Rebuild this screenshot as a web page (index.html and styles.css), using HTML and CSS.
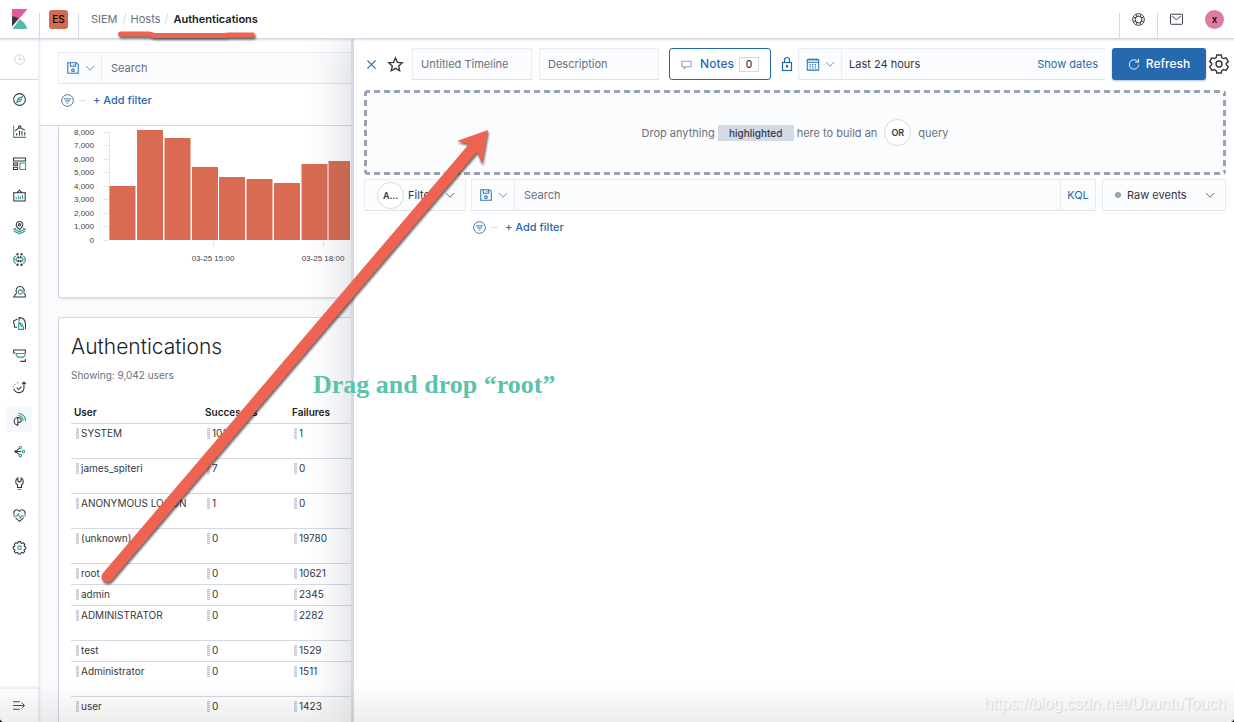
FILE: index.html
```
<!DOCTYPE html>
<html lang="en">
<head>
    <meta charset="UTF-8">
    <meta name="viewport" content="width=device-width, initial-scale=1.0">
    <title>Authentications - Hosts - SIEM</title>
    <link rel="stylesheet" href="styles.css">
</head>
<body>
    <!-- shared icons -->
    <svg class="defs" aria-hidden="true">
        <symbol id="i-save" viewBox="0 0 16 16"><path d="M2 2h10l2 2v10H2zM5 2v4h6V2M9 3.500v1"/><circle cx="8" cy="10.500" r="1.500"/></symbol>
        <symbol id="i-down" viewBox="0 0 16 16"><path d="M1.500 5 8 11.500 14.500 5"/></symbol>
        <symbol id="i-filter" viewBox="0 0 16 16"><circle cx="8" cy="8" r="7.200"/><path d="M3.500 6h9M5 8.500h6M7 11h2"/></symbol>
    </svg>

    <header class="header">
        <a class="logo" href="#" aria-label="Kibana">
            <svg width="16" height="20" viewBox="0 0 16 20">
                <path fill="#e8599b" d="M0 0h15.500L0 18z"/>
                <path fill="#343741" d="M0 7.500c2.500 0 4.800.6 6.500 1.700L0 17z"/>
                <path fill="#54b8b1" d="M7.700 10.200c3.800 2 6.500 5.400 7.500 9.800H.5z"/>
            </svg>
        </a>
        <div class="header-cell"><span class="space">ES</span></div>
        <nav class="breadcrumbs" aria-label="Breadcrumbs">
            <a href="#">SIEM</a>
            <span class="slash"></span>
            <a href="#">Hosts</a>
            <span class="slash"></span>
            <span class="current">Authentications</span>
        </nav>
        <button class="header-cell narrow" aria-label="Help">
            <svg class="icon" width="13" height="13" viewBox="0 0 16 16"><circle cx="8" cy="8" r="7.200"/><circle cx="8" cy="8" r="4.200"/><path d="M2 5.500l3 .6M5.500 2l.6 3M14 5.500l-3 .6M10.500 2l-.6 3M2 10.500l3-.6M5.500 14l.6-3M14 10.500l-3-.6M10.500 14l-.6-3"/></svg>
        </button>
        <button class="header-cell narrow" aria-label="News">
            <svg class="icon" width="13" height="11" viewBox="0 0 16 13"><rect x=".6" y="0" width="14.800" height="12.400" rx="1"/><path d="M2.500 2.200l4.700 4q.8.600 1.600 0l4.700-4"/></svg>
        </button>
        <button class="header-user" aria-label="Account"><span class="avatar">x</span></button>
    </header>

    <div class="layout">
        <nav class="sidenav" aria-label="Applications">
            <button class="recent" aria-label="Recently viewed">
                <svg class="icon" width="11" height="11" viewBox="0 0 16 16"><circle cx="8" cy="8" r="7"/><path d="M8 3.500V8h4"/></svg>
            </button>
            <ul class="apps">
                <li><a href="#" aria-label="Discover"><svg class="icon" viewBox="0 0 16 16"><circle cx="8" cy="8" r="7.200"/><path class="teal" d="M11.500 4.500l-2 5-5 2 2-5zM6.500 6.500l3 3"/></svg></a></li>
                <li><a href="#" aria-label="Visualize"><svg class="icon" viewBox="0 0 16 16"><path class="teal" d="M.8 1v14.200H16"/><path d="M4.500 13v-3M8 13V7.500M11 13V7.500M14.500 13V8.500M2.500 7.500 7 3.500M9.500 3.500l5 3"/><circle cx="8.300" cy="2.500" r="1.400"/></svg></a></li>
                <li><a href="#" aria-label="Dashboard"><svg class="icon" viewBox="0 0 16 16"><path d="M.6 1.200h14.800v3.800H.6zM.6 7.500h5v2.500h-5zM.6 12.500h5v2.800h-5z"/><path class="teal" d="M8.500 7.500h6.900v7.800H8.500z"/></svg></a></li>
                <li><a href="#" aria-label="Canvas"><svg class="icon" viewBox="0 0 16 16"><path d="M1 4.500h14v10.300H1zM5 4.500 8 1.500l3 3M0 4.500h16"/><path class="teal" d="M4 12.500V10M6.500 12.500V8M9 12.500V9M11.800 12.500V7"/></svg></a></li>
                <li><a href="#" aria-label="Maps"><svg class="icon" viewBox="0 0 16 16"><path d="M8 10.500C5 7.800 4 6.300 4 4.500a4 4 0 0 1 8 0C12 6.300 11 7.800 8 10.500z"/><circle cx="8" cy="4.600" r="1.400"/><path class="teal" d="M3.500 9 1 10.200l7 2.800 7-2.800L12.500 9M1 12.700l7 2.800 7-2.800"/></svg></a></li>
                <li><a href="#" aria-label="Machine Learning"><svg class="icon" viewBox="0 0 16 16"><path class="teal" d="M3.500 3.500 1 5.500v5l2.500 2.500M12.500 3.500l2.500 2v5L12.500 13M1 8h2M13 8h2M4 5.500v5M12 5.500v5"/><circle cx="5.500" cy="1.500" r=".8"/><circle cx="10.500" cy="1.500" r=".8"/><circle cx="6.500" cy="5.500" r=".7"/><circle cx="9.500" cy="5.500" r=".7"/><circle cx="6.500" cy="10" r=".7"/><circle cx="9.500" cy="10" r=".7"/><circle cx="5.500" cy="14.500" r=".8"/><circle cx="10.500" cy="14.500" r=".8"/></svg></a></li>
                <li><a href="#" aria-label="Metrics"><svg class="icon" viewBox="0 0 16 16"><path d="M4.500 9.500a5 5 0 1 1 9-1M4.500 9.500.8 14.800h14.400v-3L13 9.500"/><circle class="teal" cx="9" cy="8.500" r="2.500"/></svg></a></li>
                <li><a href="#" aria-label="Logs"><svg class="icon" viewBox="0 0 16 16"><path d="M5 12.500H2L.6 5 5.500 2.500M7.500 5V.8c5 0 7.700 3.500 7.900 8v6.400"/><path class="teal" d="M7 6.500v8.700h6c0-5-2.500-7.800-6-8.700zM7 6.500l4 6"/></svg></a></li>
                <li><a href="#" aria-label="APM"><svg class="icon" viewBox="0 0 16 16"><path d="M3 5H.8V1.200h14.400V5M9 15.200h6.200v-3"/><path class="teal" d="M4 5.500h11v2L13 10H6L4 7.800z"/></svg></a></li>
                <li><a href="#" aria-label="Uptime"><svg class="icon" viewBox="0 0 16 16"><path d="M1 9.500A6.400 6.400 0 0 0 13.500 9V1.200M11 3.800l2.500-2.600L16 3.800M4.500 8l2.500 2.500L10.500 7"/><path class="teal" d="M.8 7.500l.3-1.300M2 4.500l1-1M5 2.500l1.500-.5"/></svg></a></li>
                <li><a class="active" href="#" aria-label="SIEM"><svg class="icon" viewBox="0 0 16 16"><path d="M6 5.500a4.600 4.600 0 1 0 0 9.200M6 16V5.500c5.500 0 5.500 6.500 0 6.500"/><path class="teal" d="M6.500 3.200c4 0 6 3.300 6 6.500M6.500.6c5.700 0 9 4.200 9 9.400"/></svg></a></li>
                <li><a href="#" aria-label="Graph"><svg class="icon" viewBox="0 0 16 16"><path d="M3 8h7M4.500 7l3-2.500M4.500 9l3 2.500"/><circle cx="3.500" cy="8" r="1.200"/><circle class="teal" cx="9" cy="3" r="1.500"/><circle class="teal" cx="12.800" cy="8" r="1.500"/><circle class="teal" cx="9" cy="13" r="1.500"/></svg></a></li>
                <li><a href="#" aria-label="Dev Tools"><svg class="icon" viewBox="0 0 16 16"><path d="M6 1.200C2.500 3 2.500 8 5.500 9.500V13h5V9.500C13.500 8 13.500 3 10 1.200V5L8 6.200 6 5z"/><path class="teal" d="M5.500 15.300h5"/></svg></a></li>
                <li><a href="#" aria-label="Monitoring"><svg class="icon" viewBox="0 0 16 16"><path d="M1.500 7C-.5 1.500 5.500-1 8 3c2.500-4 8.500-1.500 6.500 4M3 10.500l5 4.700 5-4.700"/><path class="teal" d="M0 8.500h5l1.500-2.500 2.500 5 1.500-2.500H16"/></svg></a></li>
                <li><a href="#" aria-label="Management"><svg class="icon" viewBox="0 0 16 16"><path d="M6.600.8h2.800l.4 1.700 1.200.5 1.600-.9 2 2-.9 1.600.5 1.100 1.500.4v2.600l-1.600.4-.5 1.200.9 1.500-2 2-1.500-.9-1.200.5-.4 1.500H6.600l-.4-1.500-1.200-.5-1.500.9-2-2 .9-1.500-.5-1.200L.3 9.400V7l1.600-.4.5-1.100-.9-1.500 2-2 1.500.9 1.200-.5z"/><circle class="teal" cx="8" cy="8.200" r="2.200"/></svg></a></li>
            </ul>
            <button class="expand" aria-label="Expand navigation">
                <svg class="icon" width="12" height="9" viewBox="0 0 16 12"><path d="M0 1h9M0 6h15M0 11h9M11.500 2 15.300 6l-3.800 4"/></svg>
            </button>
        </nav>

        <main class="page">
            <div class="page-filters">
                <div class="searchbar">
                    <button class="prefix" aria-label="Saved queries"><svg class="icon" width="14" height="14"><use href="#i-save"/></svg><svg class="icon" width="10" height="10"><use href="#i-down"/></svg></button>
                    <input type="text" placeholder="Search" aria-label="Search hosts">
                </div>
                <div class="add-filter">
                    <svg class="icon" width="13" height="13"><use href="#i-filter"/></svg>
                    <span class="dash"></span>
                    <button>+ Add filter</button>
                </div>
            </div>

            <section class="card chart-card">
                <svg class="chart" width="291" height="150" role="img" aria-label="Authentications over time">
                    <path class="axis" d="M50.500 5v109M44 6.500h6M44 19.500h6M44 33.500h6M44 46.500h6M44 60.500h6M44 73.500h6M44 87.500h6M44 100.500h6M44 114.500h6M154.500 115v6M264.500 115v6"/>
                    <g class="y-labels">
                        <text x="35" y="9">8,000</text>
                        <text x="35" y="22">7,000</text>
                        <text x="35" y="36">6,000</text>
                        <text x="35" y="49">5,000</text>
                        <text x="35" y="63">4,000</text>
                        <text x="35" y="76">3,000</text>
                        <text x="35" y="90">2,000</text>
                        <text x="35" y="103">1,000</text>
                        <text x="35" y="117">0</text>
                    </g>
                    <g class="bars">
                        <rect x="50.500" y="60" width="26" height="54"/>
                        <rect x="78" y="4" width="26" height="110"/>
                        <rect x="105.500" y="12" width="26" height="102"/>
                        <rect x="133" y="41" width="26" height="73"/>
                        <rect x="160" y="51" width="26" height="63"/>
                        <rect x="187.500" y="53" width="26" height="61"/>
                        <rect x="215" y="57" width="26" height="57"/>
                        <rect x="242.500" y="38" width="26" height="76"/>
                        <rect x="269.500" y="35" width="26" height="79"/>
                    </g>
                    <g class="x-labels">
                        <text x="154" y="135">03-25 15:00</text>
                        <text x="264" y="135">03-25 18:00</text>
                    </g>
                </svg>
            </section>

            <section class="card table-card">
                <h2>Authentications</h2>
                <p class="subtitle">Showing: 9,042 users</p>
                <table>
                    <thead>
                        <tr><th class="col-user">User</th><th class="col-success">Successes</th><th>Failures</th></tr>
                    </thead>
                    <tbody>
                        <tr class="tall"><td><span class="grip"></span>SYSTEM</td><td><span class="grip"></span>1022</td><td><span class="grip"></span>1</td></tr>
                        <tr class="tall"><td><span class="grip"></span>james_spiteri</td><td><span class="grip"></span>7</td><td><span class="grip"></span>0</td></tr>
                        <tr class="tall"><td><span class="grip"></span>ANONYMOUS LOGON</td><td><span class="grip"></span>1</td><td><span class="grip"></span>0</td></tr>
                        <tr class="tall"><td><span class="grip"></span>(unknown)</td><td><span class="grip"></span>0</td><td><span class="grip"></span>19780</td></tr>
                        <tr><td><span class="grip"></span>root</td><td><span class="grip"></span>0</td><td><span class="grip"></span>10621</td></tr>
                        <tr><td><span class="grip"></span>admin</td><td><span class="grip"></span>0</td><td><span class="grip"></span>2345</td></tr>
                        <tr class="tall"><td><span class="grip"></span>ADMINISTRATOR</td><td><span class="grip"></span>0</td><td><span class="grip"></span>2282</td></tr>
                        <tr><td><span class="grip"></span>test</td><td><span class="grip"></span>0</td><td><span class="grip"></span>1529</td></tr>
                        <tr class="tall"><td><span class="grip"></span>Administrator</td><td><span class="grip"></span>0</td><td><span class="grip"></span>1511</td></tr>
                        <tr class="tall"><td><span class="grip"></span>user</td><td><span class="grip"></span>0</td><td><span class="grip"></span>1423</td></tr>
                    </tbody>
                </table>
            </section>
        </main>

        <aside class="timeline" aria-label="Timeline">
            <div class="toolbar">
                <div class="toolbar-icons">
                    <button class="link" aria-label="Close"><svg class="icon" width="11" height="11" viewBox="0 0 12 12"><path d="M1.500 1.500l9 9M10.500 1.500l-9 9"/></svg></button>
                    <button aria-label="Favorite"><svg class="icon bold" width="15" height="15" viewBox="0 0 16 16"><path d="M8 1l2.100 4.700 5.200.5-3.900 3.400 1.100 5.100L8 12.100l-4.500 2.600 1.100-5.100L.7 6.200l5.200-.5z"/></svg></button>
                </div>
                <div class="names">
                    <input class="field" type="text" placeholder="Untitled Timeline" aria-label="Timeline title">
                    <input class="field" type="text" placeholder="Description" aria-label="Timeline description">
                </div>
                <button class="notes">
                    <svg class="icon" width="11" height="11" viewBox="0 0 12 12"><path d="M1 2.500h10v6H5.500L3.500 10.500v-2H1z"/></svg>
                    Notes
                    <span class="count">0</span>
                </button>
                <div class="dates">
                    <button class="lock" aria-label="Lock date range"><svg class="icon" width="12" height="16" viewBox="0 0 12 16"><rect x="1.500" y="6.500" width="9" height="8"/><path d="M3.500 6.500V4a2.500 2.500 0 0 1 5 0v2.500M6 9.500v2.200"/><circle cx="6" cy="10" r=".6"/></svg></button>
                    <div class="searchbar">
                        <button class="prefix" aria-label="Quick select"><svg class="icon" width="14" height="14" viewBox="0 0 16 16"><path d="M1.500 3h13v12h-13zM1.500 6h13M4.500 1v3M8 1v3M11.500 1v3"/><path stroke-dasharray="1.500 1.500" d="M4 8.500h8.500M4 10.500h8.500M4 12.500h8.500"/></svg><svg class="icon" width="10" height="10"><use href="#i-down"/></svg></button>
                        <button class="range">Last 24 hours</button>
                        <button class="show-dates">Show dates</button>
                    </div>
                </div>
                <div class="actions">
                    <button class="refresh">
                        <svg class="icon" width="12" height="12" viewBox="0 0 16 16"><path d="M13.500 5.500A6.300 6.300 0 1 0 14.300 9M14 1v4.500H9.500"/></svg>
                        Refresh
                    </button>
                    <button class="settings" aria-label="Timeline settings"><svg class="icon bold" width="20" height="20" viewBox="0 0 20 20"><path d="M7.800 1h4.400l.6 2.600 1.700 1 2.600-.8 2.200 3.800-2 1.800v1.400l2 1.800-2.200 3.800-2.600-.8-1.700 1-.6 2.400H7.800l-.6-2.400-1.700-1-2.600.8L.7 12.600l2-1.800V9.400l-2-1.800 2.200-3.800 2.600.8 1.700-1z"/><circle cx="10" cy="10" r="3"/></svg></button>
                </div>
            </div>

            <div class="dropzone">
                <span>Drop anything</span>
                <span class="highlighted">highlighted</span>
                <span>here to build an</span>
                <span class="circle or">OR</span>
                <span>query</span>
            </div>

            <div class="query-row">
                <label class="picker filter-picker">
                    <span class="circle">A...</span>
                    <select aria-label="Query mode">
                        <option>Filter</option>
                        <option>Search</option>
                    </select>
                    <svg class="icon" width="10" height="10"><use href="#i-down"/></svg>
                </label>
                <div class="searchbar">
                    <button class="prefix" aria-label="Saved queries"><svg class="icon" width="14" height="14"><use href="#i-save"/></svg><svg class="icon" width="10" height="10"><use href="#i-down"/></svg></button>
                    <input type="text" placeholder="Search" aria-label="Search timeline">
                    <button class="kql">KQL</button>
                </div>
                <label class="picker events-picker">
                    <span class="dot"></span>
                    <select aria-label="Event type">
                        <option>Raw events</option>
                        <option>All events</option>
                    </select>
                    <svg class="icon" width="10" height="10"><use href="#i-down"/></svg>
                </label>
            </div>
            <div class="add-filter timeline-filter">
                <svg class="icon" width="13" height="13"><use href="#i-filter"/></svg>
                <span class="dash"></span>
                <button>+ Add filter</button>
            </div>
        </aside>
    </div>

    <!-- annotations drawn over the app -->
    <svg class="marks" width="560" height="600" aria-hidden="true">
        <path class="underline" d="M120.500 34H149l5 1.500h70l5-.5h23.500"/>
        <path class="arrow" d="M488 130l-6 34-5-12L112 580c-5 6-14 0-9-7L469 144l-12-3z"/>
    </svg>
    <p class="drag-note">Drag and drop “root”</p>
    <div class="bottom-fade"></div>
    <p class="watermark">https://blog.csdn.net/UbuntuTouch</p>
</body>
</html>
```
FILE: styles.css
```
* {
    box-sizing: border-box;
}
body {
    display: flex;
    flex-direction: column;
    height: 100vh;
    margin: 0;
    overflow: hidden;
    position: relative;
    background: #fff;
    color: #343741;
    font-family: Inter, "Liberation Sans", sans-serif;
    font-size: 11px;
    line-height: 16px;
}
button, input, select {
    margin: 0;
    padding: 0;
    border: 0;
    background: none;
    color: inherit;
    font: inherit;
}
input::placeholder {
    color: #69707d;
    opacity: 1;
}
a {
    color: inherit;
    text-decoration: none;
}
p, h2, ul {
    margin: 0;
    padding: 0;
}
.defs {
    position: absolute;
    width: 0;
    height: 0;
}
.icon {
    flex: none;
    fill: none;
    stroke: currentColor;
    stroke-width: 1.2;
    overflow: visible;
}
.icon.bold {
    stroke-width: 1.4;
}
.teal {
    stroke: #2b9a92;
}

/* header */
.header {
    display: flex;
    flex: none;
    height: 39px;
    border-bottom: 1px solid #d3dae6;
    box-shadow: 0 1px 2px rgba(152, 162, 179, 0.4);
    position: relative;
    z-index: 3;
    background: #fff;
}
.logo, .header-cell, .header-user {
    display: flex;
    justify-content: center;
    align-items: center;
    width: 39px;
}
.header-cell {
    position: relative;
}
.narrow {
    width: 38px;
}
.header-cell::before, .breadcrumbs::before {
    content: "";
    position: absolute;
    left: 0;
    top: 13px;
    bottom: 0;
    border-left: 1px solid #d3dae6;
}
.space {
    width: 19px;
    border-radius: 3px;
    background: #d36b51;
    color: #000;
    font-size: 10px;
    font-weight: 500;
    line-height: 19px;
    text-align: center;
}
.breadcrumbs {
    display: flex;
    flex: 1;
    align-items: center;
    gap: 6px;
    padding-left: 13px;
    color: #69707d;
    position: relative;
}
.slash {
    width: 1px;
    height: 12px;
    background: #d3dae6;
    transform: rotate(15deg);
}
.current {
    color: #1a1c21;
    font-weight: 600;
}
.avatar {
    width: 19px;
    border-radius: 50%;
    background: #dd7ba0;
    color: #000;
    font-size: 10px;
    font-weight: 500;
    line-height: 19px;
}

.layout {
    display: flex;
    flex: 1;
    min-height: 0;
}

/* side navigation */
.sidenav {
    display: flex;
    flex-direction: column;
    flex: none;
    width: 39px;
    border-right: 1px solid #eceff5;
    box-shadow: 1px 0 2px rgba(152, 162, 179, 0.2);
    position: relative;
    z-index: 1;
    background: #fff;
}
.recent {
    display: flex;
    justify-content: center;
    align-items: center;
    height: 41px;
    border-bottom: 1px solid #d3dae6;
    color: #c2c3c6;
}
.apps {
    display: flex;
    flex: 1;
    flex-direction: column;
    gap: 6px;
    padding: 6px;
    list-style: none;
}
.apps a {
    display: flex;
    justify-content: center;
    align-items: center;
    height: 26px;
    border-radius: 3px;
}
.apps .icon {
    width: 13px;
    height: 13px;
    stroke-width: 1.3;
}
.apps .active {
    background: #f5f7fa;
}
.expand {
    height: 34px;
    border-top: 1px solid #eceff5;
    box-shadow: 0 -1px 2px rgba(152, 162, 179, 0.2);
}

/* hosts page behind the timeline */
.page {
    flex: none;
    width: 312px;
    overflow: hidden;
    background: #fafbfd;
}
.page-filters {
    height: 87px;
    padding: 13px 0 0 19px;
    border-bottom: 1px solid #d3dae6;
    background: #fff;
}
.searchbar {
    display: flex;
    flex: 1;
    min-width: 0;
    height: 32px;
    border: 1px solid #e9edf3;
    border-bottom-color: #dde2ea;
    background: #fbfcfd;
}
.page-filters .searchbar {
    border-right: 0;
}
.searchbar input {
    flex: 1;
    min-width: 0;
    padding: 0 9px;
}
.prefix {
    display: flex;
    flex: none;
    justify-content: center;
    align-items: center;
    gap: 5px;
    width: 43px;
    border-right: 1px solid #e9edf3;
    color: #2f75b8;
}
.add-filter {
    display: flex;
    align-items: center;
    gap: 5px;
    margin-top: 8px;
    padding-left: 3px;
    color: #2f75b8;
}
.add-filter button {
    margin-left: 2px;
    color: #2769ae;
    font-weight: 500;
}
.dash {
    width: 7px;
    border-top: 1px solid #d3dae6;
}
.card {
    margin-left: 19px;
    border: 1px solid #d3dae6;
    border-right: 0;
    border-radius: 3px 0 0 3px;
    box-shadow: 0 1px 2px rgba(152, 162, 179, 0.3);
    background: #fff;
}
.chart-card {
    height: 172px;
    border-top: 0;
    border-top-left-radius: 0;
}
.chart {
    display: block;
    font-family: "Liberation Sans", sans-serif;
    font-size: 8px;
    fill: #444;
}
.y-labels {
    text-anchor: end;
}
.x-labels {
    text-anchor: middle;
}
.axis {
    stroke: #e5e5e5;
    fill: none;
}
.bars {
    fill: #d86b52;
    stroke: none;
}
.table-card {
    margin-top: 19px;
    padding: 14px 0 0 12px;
}
h2 {
    color: #1a1c21;
    font-size: 21px;
    font-weight: 300;
    line-height: 30px;
}
.subtitle {
    margin-top: 5px;
    color: #69707d;
    font-size: 10px;
}
table {
    width: 100%;
    margin-top: 18px;
    border-collapse: collapse;
    table-layout: fixed;
    font-size: 10px;
}
th {
    height: 22px;
    padding: 0 3px;
    color: #1a1c21;
    font-weight: 600;
    text-align: left;
}
.col-user {
    width: 131px;
}
.col-success {
    width: 87px;
}
td {
    height: 21px;
    padding: 1px 5px;
    border-top: 1px solid #d3dae6;
    vertical-align: top;
    white-space: nowrap;
}
.tall td {
    height: 35px;
}
.grip {
    display: inline-block;
    width: 3px;
    height: 11px;
    margin-right: 2px;
    vertical-align: middle;
    background: repeating-linear-gradient(#c5cad6 0 1px, #dfe3ea 1px 2px);
}

/* timeline flyout */
.timeline {
    flex: 1;
    min-width: 0;
    padding-top: 9px;
    border-left: 3px solid #d3dae6;
    box-shadow: -4px 0 40px rgba(65, 78, 101, 0.22);
    position: relative;
    z-index: 2;
    background: #fff;
}
.toolbar {
    display: flex;
    align-items: center;
    gap: 5px;
    padding: 0 5px;
}
.toolbar-icons {
    display: flex;
}
.toolbar-icons button {
    display: flex;
    justify-content: center;
    align-items: center;
    width: 24px;
}
.link {
    color: #2769ae;
}
.names {
    display: flex;
    gap: 7px;
}
.field {
    width: 120px;
    height: 32px;
    padding: 0 8px;
    border: 1px solid #e9edf3;
    border-bottom-color: #dde2ea;
    background: #fbfcfd;
}
.notes {
    display: flex;
    flex: none;
    align-items: center;
    justify-content: center;
    gap: 5px;
    width: 102px;
    height: 32px;
    margin-left: 5px;
    border: 1px solid #2769ae;
    border-radius: 3px;
    color: #2769ae;
    font-size: 12px;
    font-weight: 500;
}
.notes .icon {
    margin-right: 3px;
    color: #98a2b3;
}
.count {
    width: 20px;
    border: 1px solid #d3dae6;
    color: #343741;
    font-size: 10px;
    line-height: 13px;
}
.dates {
    display: flex;
    flex: 1;
    min-width: 0;
}
.dates .searchbar {
    border-right: 0;
}
.lock {
    width: 22px;
    padding-top: 4px;
    color: #2769ae;
}
.range {
    flex: 1;
    padding-left: 7px;
    text-align: left;
}
.show-dates {
    padding-right: 7px;
    color: #2769ae;
}
.actions {
    display: flex;
    gap: 3px;
    margin-left: 2px;
}
.refresh {
    display: flex;
    align-items: center;
    justify-content: center;
    gap: 6px;
    width: 94px;
    height: 32px;
    border-radius: 3px;
    background: #2769ae;
    box-shadow: 0 1px 2px rgba(39, 105, 174, 0.4);
    color: #fff;
    font-size: 12px;
    font-weight: 500;
}
.settings {
    display: flex;
    align-items: center;
}
/* dashed frame drawn with gradients, 6px dashes every 10px */
.dropzone {
    display: flex;
    align-items: center;
    justify-content: center;
    gap: 3px;
    height: 85px;
    margin: 10px 8px 0 10px;
    border-radius: 4px;
    background:
        repeating-linear-gradient(90deg, #98a2b3 0 6px, #fbfcfd 6px 10px) top / 100% 3px no-repeat,
        repeating-linear-gradient(90deg, #98a2b3 0 6px, #fbfcfd 6px 10px) bottom / 100% 3px no-repeat,
        repeating-linear-gradient(#98a2b3 0 6px, #fbfcfd 6px 10px) left / 3px 100% no-repeat,
        repeating-linear-gradient(#98a2b3 0 6px, #fbfcfd 6px 10px) right / 3px 100% no-repeat,
        #fbfcfd;
    color: #69707d;
}
.highlighted {
    width: 76px;
    background: #d3dae6;
    color: #343741;
    font-size: 10px;
    font-weight: 500;
    text-align: center;
}
.circle {
    flex: none;
    width: 27px;
    border: 1px solid #d3dae6;
    border-radius: 50%;
    background: #fff;
    color: #343741;
    font-size: 9px;
    font-weight: 600;
    line-height: 25px;
    text-align: center;
}
.or {
    margin: 0 4px;
}
.query-row {
    display: flex;
    gap: 5px;
    margin: 4px 8px 0 10px;
}
.picker {
    display: flex;
    flex: none;
    align-items: center;
    height: 32px;
    border: 1px solid #e9edf3;
    border-bottom-color: #dde2ea;
    background: #fbfcfd;
}
.picker select {
    flex: 1;
    min-width: 0;
    appearance: none;
}
.filter-picker {
    gap: 4px;
    width: 102px;
    padding: 0 10px 0 12px;
}
.events-picker {
    gap: 6px;
    width: 124px;
    margin-left: 1px;
    padding: 0 10px 0 12px;
}
.dot {
    width: 6px;
    height: 6px;
    border-radius: 50%;
    background: #98a2b3;
}
.kql {
    width: 35px;
    border-left: 1px solid #e9edf3;
    color: #2769ae;
}
.timeline-filter {
    margin-left: 116px;
}

/* annotations */
.marks {
    position: absolute;
    left: 0;
    top: 0;
    z-index: 4;
    pointer-events: none;
    filter: drop-shadow(1px 2px 1px rgba(0, 0, 0, 0.6));
}
.underline {
    fill: none;
    stroke: #ee6352;
    stroke-width: 5;
    stroke-linecap: round;
}
.arrow {
    fill: #ee6352;
}
.drag-note {
    position: absolute;
    left: 313px;
    top: 369px;
    z-index: 5;
    color: #5bc2ac;
    font-family: "Liberation Serif", serif;
    font-size: 26px;
    font-weight: 700;
    line-height: 32px;
    pointer-events: none;
}
.bottom-fade {
    position: absolute;
    left: 0;
    right: 0;
    bottom: 0;
    z-index: 5;
    height: 40px;
    background: linear-gradient(rgba(0, 0, 0, 0), rgba(0, 0, 0, 0.07));
    pointer-events: none;
}
.bottom-fade::before, .bottom-fade::after {
    content: "";
    position: absolute;
    left: 0;
    bottom: 0;
    width: 5px;
    height: 5px;
    background: radial-gradient(circle at top right, rgba(0, 0, 0, 0) 5px, #000 6px);
}
.bottom-fade::after {
    left: auto;
    right: 0;
    background: radial-gradient(circle at top left, rgba(0, 0, 0, 0) 5px, #000 6px);
}
.watermark {
    position: absolute;
    right: 8px;
    bottom: 8px;
    z-index: 6;
    color: #f7f7f7;
    font-family: "Liberation Sans", sans-serif;
    font-size: 16px;
    line-height: 20px;
    text-shadow: 1px 1px 1px #d0d0d0;
    pointer-events: none;
}
```
